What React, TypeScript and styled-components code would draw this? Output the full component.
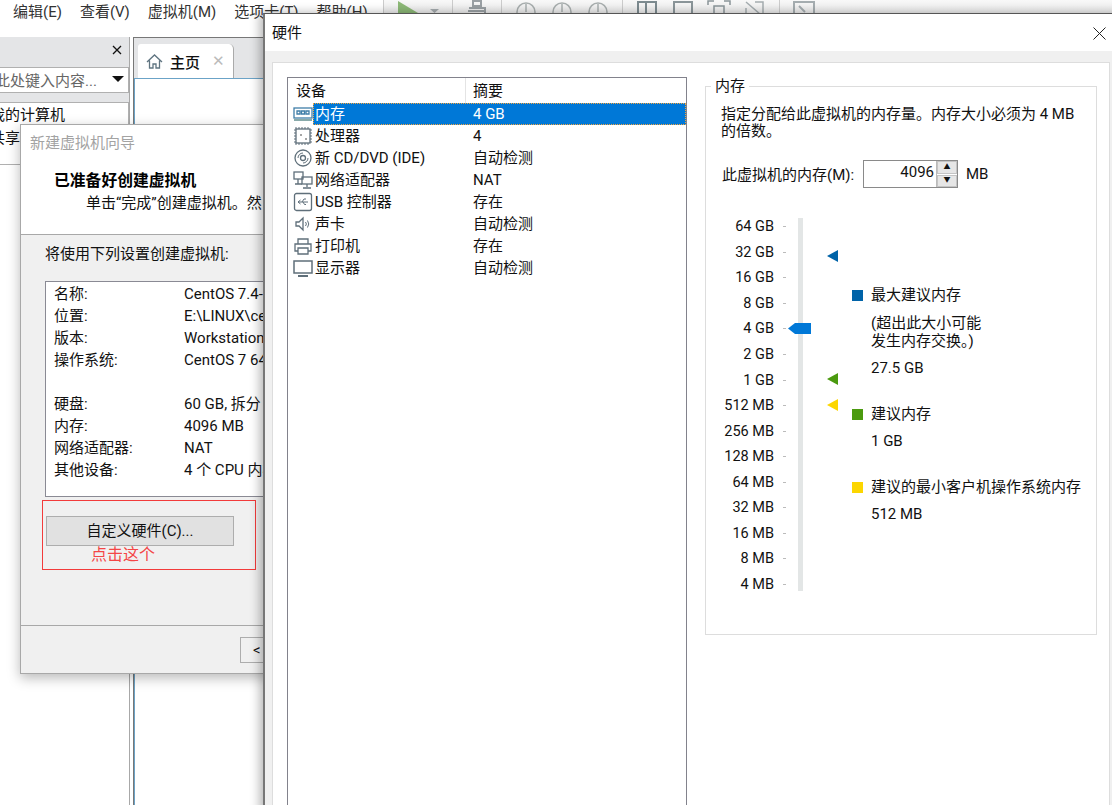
import styled, { createGlobalStyle } from 'styled-components';

const GlobalStyle = createGlobalStyle`
  html, body {
    margin: 0;
    padding: 0;
    background: #fff;
  }
  body {
    font-family: Roboto, "Noto Sans CJK SC", sans-serif;
    font-size: 15px;
    color: #111;
  }
`;

const Desktop = styled.div`
  position: relative;
  width: 1112px;
  height: 805px;
  overflow: hidden;
  background: #fff;
`;

/* main workstation window behind the dialogs */
const MenuBar = styled.div`
  height: 37px;
  display: flex;
  align-items: flex-start;
  background: #fff;
`;

const MenuList = styled.div`
  display: flex;
  gap: 18px;
  padding: 3px 0 0 13px;
  width: 383px;
  flex: none;
  box-sizing: border-box;
  line-height: 19px;
  color: #333;
  white-space: nowrap;
`;

const Toolbar = styled.div`
  flex: 1;
  display: flex;
  align-items: flex-start;
  background: linear-gradient(#f8f8f8, #ececec);
  height: 14px;
  overflow: hidden;
  filter: blur(0.4px);
`;

const ToolGroup = styled.div`
  display: flex;
  align-items: flex-start;
  gap: 12px;
  height: 14px;
  padding: 0 12px;
  border-left: 1px solid #ccc;
`;

const Workspace = styled.div`
  display: flex;
  height: 768px;
`;

const Library = styled.div`
  width: 129px;
  flex: none;
  background: #fff;
  border-right: 1px solid #a8a8a8;
  display: flex;
  flex-direction: column;
`;

const LibraryHead = styled.div`
  background: #e4e5e7;
  height: 65px;
  display: flex;
  flex-direction: column;
  align-items: flex-end;
`;

const LibraryClose = styled.div`
  height: 30px;
  padding: 6px 6px 0 0;
  box-sizing: border-box;
  line-height: 16px;
`;

const SearchBox = styled.div`
  width: 129px;
  height: 26px;
  box-sizing: border-box;
  background: #fff;
  border: 1px solid #b0b0b0;
  border-left: 0;
  display: flex;
  align-items: center;
  justify-content: space-between;
  padding: 0 4px 2px 0;
  color: #666;
  white-space: nowrap;
  overflow: hidden;
`;

const SearchText = styled.span`
  margin-left: -20px;
`;

const Caret = styled.span`
  width: 0;
  height: 0;
  border-left: 6px solid transparent;
  border-right: 6px solid transparent;
  border-top: 6px solid #111;
  flex: none;
`;

const LibraryTree = styled.div`
  height: 60px;
  background: #fff;
  border: 1px solid #b0b0b0;
  border-left: 0;
  line-height: 23px;
  padding-top: 1px;
  white-space: nowrap;
  overflow: hidden;
`;

const TreeItem = styled.div`
  margin-left: -10px;
`;

const TabArea = styled.div`
  flex: 1;
  background: #e4e5e7;
  margin-left: 3px;
  border-left: 1px solid #777;
  border-top: 1px solid #777;
  display: flex;
  flex-direction: column;
`;

const TabStrip = styled.div`
  height: 40px;
  padding: 6px 0 0 4px;
  box-sizing: border-box;
  display: flex;
`;

const Tab = styled.div`
  width: 96px;
  height: 34px;
  box-sizing: border-box;
  background: #fff;
  border-right: 1px solid #aaa;
  border-radius: 3px 5px 0 0;
  display: flex;
  align-items: center;
  gap: 7px;
  padding-left: 8px;
  font-weight: 500;
`;

const TabClose = styled.span`
  color: #bbb;
  font-size: 15px;
  margin-left: 5px;
`;

const TabBody = styled.div`
  flex: 1;
  background: #fff;
  border-top: 1px solid #6ba3c7;
  border-left: 1px solid #6ba3c7;
`;

/* windows on the desktop */
const WizardWindow = styled.div`
  position: absolute;
  left: 20px;
  top: 124px;
  width: 250px;
  height: 550px;
  box-sizing: border-box;
  border: 1px solid #a8a8a8;
  background: #f0f0f0;
  box-shadow: 0 4px 12px rgba(0, 0, 0, 0.28);
  display: flex;
  flex-direction: column;
  white-space: nowrap;
  overflow: hidden;
`;

const WizardHeader = styled.div`
  height: 109px;
  flex: none;
  background: #fff;
  border-bottom: 1px solid #a8a8a8;
  display: flex;
  flex-direction: column;
`;

const WizardTitle = styled.div`
  color: #a3a3a3;
  padding: 9px 0 0 9px;
  line-height: 19px;
`;

const WizardHeading = styled.div`
  font-weight: 700;
  font-size: 15.800px;
  color: #000;
  padding: 18px 0 0 33px;
  line-height: 19px;
`;

const WizardSub = styled.div`
  padding: 4px 0 0 65px;
  line-height: 19px;
`;

const WizardBody = styled.div`
  flex: 1;
  padding: 10px 0 0 24px;
  display: flex;
  flex-direction: column;
`;

const SummaryLabel = styled.div`
  line-height: 19px;
  margin-bottom: 17px;
`;

const SummaryBox = styled.div`
  width: 400px;
  height: 216px;
  box-sizing: border-box;
  background: #fff;
  border: 1px solid #8a8a94;
  padding: 1px 0 0 8px;
  line-height: 22px;
`;

const SummaryRow = styled.div`
  display: grid;
  grid-template-columns: 130px 1fr;
  height: 22px;
`;

const CustomArea = styled.div`
  position: relative;
  width: 214px;
  height: 70px;
  box-sizing: border-box;
  margin: 3px 0 0 -3px;
  border: 1px solid #f23b3b;
  padding: 15px 0 0 3px;
`;

const CustomButton = styled.div`
  width: 188px;
  height: 30px;
  box-sizing: border-box;
  background: #e1e1e1;
  border: 1px solid #adadad;
  text-align: center;
  line-height: 29px;
`;

const Annotation = styled.div`
  position: absolute;
  left: 48px;
  top: 44px;
  color: #f44646;
  font-size: 16px;
  line-height: 20px;
`;

const WizardFooter = styled.div`
  height: 48px;
  flex: none;
  border-top: 1px solid #a8a8a8;
  padding: 11px 0 0 219px;
  box-sizing: border-box;
`;

const BackButton = styled.div`
  width: 70px;
  height: 26px;
  box-sizing: border-box;
  border: 1px solid #adadad;
  line-height: 24px;
  padding-left: 12px;
`;

const HardwareWindow = styled.div`
  position: absolute;
  left: 263px;
  top: 13px;
  width: 860px;
  height: 800px;
  box-sizing: border-box;
  border-top: 1px solid #555;
  border-left: 2px solid #777;
  background: #f0f0f0;
  box-shadow: -3px 0 10px rgba(0, 0, 0, 0.3);
  display: flex;
  flex-direction: column;
`;

const HardwareTitle = styled.div`
  height: 37px;
  flex: none;
  box-sizing: border-box;
  background: #fff;
  display: flex;
  align-items: center;
  justify-content: space-between;
  padding: 2px 17px 0 7px;
  line-height: 19px;
`;

const HardwareBody = styled.div`
  flex: 1;
  margin: 11px 0 0 7px;
  width: 838px;
  box-sizing: border-box;
  background: #fff;
  border: 1px solid #ddd;
  border-bottom: 0;
  padding: 14px 0 0 14px;
  display: flex;
  gap: 18px;
`;

const DeviceList = styled.div`
  width: 400px;
  flex: none;
  box-sizing: border-box;
  border: 1px solid #82828c;
  border-bottom: 0;
  background: #fff;
`;

const DeviceHead = styled.div`
  height: 25px;
  display: grid;
  grid-template-columns: 177px 1fr;
  line-height: 27px;
`;

const HeadCell = styled.div`
  padding-left: 8px;
  & + & {
    border-left: 1px solid #e4e4e4;
    padding-left: 7px;
  }
`;

const DeviceRow = styled.div`
  height: 22px;
  display: flex;
  align-items: center;
  padding-left: 5px;
`;

const DeviceIcon = styled.svg`
  width: 20px;
  height: 20px;
  flex: none;
  fill: none;
  stroke: #5f6f7a;
  stroke-width: 1.3;
`;

const DeviceCells = styled.div<{ $selected?: boolean }>`
  flex: 1;
  height: 22px;
  box-sizing: border-box;
  display: grid;
  grid-template-columns: 158px 1fr;
  line-height: 21px;
  padding: 0 0 0 1px;
  color: ${(p) => (p.$selected ? '#fff' : '#111')};
  background: ${(p) => (p.$selected ? '#0078d7' : 'transparent')};
  border: 1px dotted ${(p) => (p.$selected ? '#f4a640' : 'transparent')};
  white-space: nowrap;
`;

const MemoryGroup = styled.fieldset`
  width: 392px;
  height: 558px;
  box-sizing: border-box;
  margin: 0;
  padding: 0 16px;
  border: 1px solid #ddd;
  min-inline-size: 0;
`;

const GroupLegend = styled.legend`
  margin-left: -11px;
  padding: 0 4px;
  line-height: 19px;
`;

const MemoryText = styled.div`
  line-height: 17px;
  margin-top: 10px;
  margin-left: -1px;
  white-space: nowrap;
`;

const SizeRow = styled.div`
  display: flex;
  align-items: center;
  margin-top: 20px;
  height: 28px;
`;

const SizeLabel = styled.span`
  width: 141px;
  flex: none;
  white-space: nowrap;
  padding-bottom: 2px;
`;

const SpinInput = styled.div`
  width: 95px;
  height: 28px;
  box-sizing: border-box;
  border: 1px solid #8a8a8a;
  display: flex;
  justify-content: space-between;
  padding-left: 6px;
`;

const SpinValue = styled.span`
  flex: 1;
  text-align: right;
  padding-right: 2px;
  line-height: 22px;
`;

const SpinButtons = styled.div`
  width: 20px;
  flex: none;
  display: flex;
  flex-direction: column;
  gap: 1px;
  background: #fff;
  border-left: 1px solid #bbb;
`;

const SpinButton = styled.div`
  flex: 1;
  background: #e6e6e6;
  border: 1px solid #c4c4c4;
  display: flex;
  align-items: center;
  justify-content: center;
  font-size: 7px;
  line-height: 1;
`;

const SizeUnit = styled.span`
  margin-left: 8px;
`;

const MemoryChart = styled.div`
  display: flex;
  margin-top: 25px;
`;

const Scale = styled.div`
  position: relative;
  width: 130px;
  flex: none;
`;

const Track = styled.div`
  position: absolute;
  left: 76px;
  top: 5px;
  width: 5px;
  height: 373px;
  background: #e3e6e6;
`;

const ScaleRow = styled.div`
  height: 25.55px;
  width: 64px;
  box-sizing: border-box;
  padding-top: 2px;
  display: flex;
  justify-content: flex-end;
  align-items: center;
  gap: 9px;
  line-height: 25px;
  white-space: nowrap;
  font-size: 14.500px;
`;

const Tick = styled.span`
  width: 3px;
  height: 1px;
  background: #bbb;
  flex: none;
  order: 1;
`;

const Thumb = styled.svg`
  position: absolute;
  left: 66px;
  top: 109px;
  width: 23px;
  height: 13px;
`;

const Marker = styled.svg<{ $top: number }>`
  position: absolute;
  left: 105px;
  top: ${(p) => p.$top}px;
  width: 11px;
  height: 12px;
`;

const Legend = styled.div`
  display: flex;
  flex-direction: column;
  padding-top: 73px;
`;

const LegendTitle = styled.div`
  display: flex;
  align-items: center;
  gap: 8px;
  line-height: 19px;
  white-space: nowrap;
`;

const Swatch = styled.span<{ $color: string }>`
  width: 11px;
  height: 11px;
  background: ${(p) => p.$color};
  flex: none;
`;

const LegendNote = styled.div`
  margin: 9px 0 1px 19px;
  line-height: 18px;
  white-space: nowrap;
`;

const LegendValue = styled.div`
  margin: 8px 0 27px 19px;
  line-height: 19px;
`;

const menus = ['编辑(E)', '查看(V)', '虚拟机(M)', '选项卡(T)', '帮助(H)'];

const wizardRows: [string, string][] = [
  ['名称:', 'CentOS 7.4-64'],
  ['位置:', 'E:\\LINUX\\centos'],
  ['版本:', 'Workstation 15.x'],
  ['操作系统:', 'CentOS 7 64 位'],
  ['', ''],
  ['硬盘:', '60 GB, 拆分'],
  ['内存:', '4096 MB'],
  ['网络适配器:', 'NAT'],
  ['其他设备:', '4 个 CPU 内核'],
];

const devices: { name: string; summary: string; icon: React.ReactNode }[] = [
  {
    name: '内存',
    summary: '4 GB',
    icon: (
      <>
        <rect x="1" y="4" width="18" height="10" stroke="#3f7ea8" />
        <path d="M4 7h3v3H4zM8.500 7h3v3h-3zM13 7h3v3h-3z" stroke="#3f7ea8" />
        <path d="M1 16h18" stroke="#8aa" strokeWidth="2" />
      </>
    ),
  },
  {
    name: '处理器',
    summary: '4',
    icon: (
      <>
        <rect x="3" y="3" width="14" height="14" />
        <circle cx="13" cy="13" r="0.8" fill="#333" stroke="none" />
        <circle cx="8" cy="9" r="0.8" fill="#333" stroke="none" />
        <path d="M3 1v2M6 1v2M9 1v2M12 1v2M15 1v2M3 17v2M6 17v2M9 17v2M12 17v2M15 17v2M1 4h2M1 7h2M1 10h2M1 13h2M1 16h2M17 4h2M17 7h2M17 10h2M17 13h2M17 16h2" strokeWidth="1" />
      </>
    ),
  },
  {
    name: '新 CD/DVD (IDE)',
    summary: '自动检测',
    icon: (
      <>
        <circle cx="10" cy="10" r="8" />
        <circle cx="10" cy="10" r="2.500" />
        <path d="M5 10a5 5 0 0 1 5-5M15 10a5 5 0 0 1-5 5" strokeWidth="1" />
      </>
    ),
  },
  {
    name: '网络适配器',
    summary: 'NAT',
    icon: (
      <>
        <rect x="1" y="2" width="9" height="7" />
        <rect x="9" y="7" width="10" height="7" />
        <path d="M5 9v5h4M14 14v3M10 18h8M2 14h3" />
      </>
    ),
  },
  {
    name: 'USB 控制器',
    summary: '存在',
    icon: (
      <>
        <rect x="1.500" y="1.500" width="17" height="17" rx="2" />
        <path d="M5 10h10M5 10l2.500-2M5 10l2.500 2M9 10l2-3h2M10 10l1.500 2.500H13" strokeWidth="1" />
      </>
    ),
  },
  {
    name: '声卡',
    summary: '自动检测',
    icon: (
      <>
        <path d="M3 8h3l4-4v12l-4-4H3z" />
        <path d="M12.500 8a3 3 0 0 1 0 4M14.500 6.500a6 6 0 0 1 0 7" strokeWidth="1" />
      </>
    ),
  },
  {
    name: '打印机',
    summary: '存在',
    icon: (
      <>
        <path d="M5 8V3h10v5M5 15H2V8h16v7h-3" />
        <path d="M5 12h10v6H5z" />
      </>
    ),
  },
  {
    name: '显示器',
    summary: '自动检测',
    icon: (
      <>
        <rect x="1" y="3" width="18" height="12" strokeWidth="1.500" />
        <path d="M5 18h10" strokeWidth="2" />
      </>
    ),
  },
];

const scaleLabels = [
  '64 GB', '32 GB', '16 GB', '8 GB', '4 GB', '2 GB', '1 GB', '512 MB',
  '256 MB', '128 MB', '64 MB', '32 MB', '16 MB', '8 MB', '4 MB',
];

function Clock() {
  return (
    <svg width="24" height="14" viewBox="0 0 24 14" fill="none" stroke="#aab0b0" strokeWidth="1.500">
      <circle cx="12" cy="12" r="9" />
      <path d="M12 4v8" />
    </svg>
  );
}

function Square() {
  return (
    <svg width="24" height="14" viewBox="0 0 24 14" fill="none" stroke="#7d8b90" strokeWidth="2">
      <rect x="3" y="2" width="18" height="18" />
      <path d="M11 2v18" />
    </svg>
  );
}

export default function App() {
  return (
    <Desktop>
      <GlobalStyle />
      <MenuBar>
        <MenuList>
          {menus.map((m) => (
            <span key={m}>{m}</span>
          ))}
        </MenuList>
        <Toolbar>
          <ToolGroup>
            <svg width="22" height="14" viewBox="0 0 22 14">
              <path d="M2 1l20 12H2z" fill="#8db977" />
            </svg>
            <svg width="10" height="14" viewBox="0 0 10 14">
              <path d="M0 9h9l-4.500 4z" fill="#a5abae" />
            </svg>
          </ToolGroup>
          <ToolGroup>
            <svg width="24" height="14" viewBox="0 0 24 14" fill="none" stroke="#9aa0a4" strokeWidth="2">
              <path d="M8 1h8v5H8zM3 11h18M4 8h16v6M12 6v2" />
            </svg>
          </ToolGroup>
          <ToolGroup>
            <Clock />
            <Clock />
            <Clock />
          </ToolGroup>
          <ToolGroup>
            <Square />
            <svg width="24" height="14" viewBox="0 0 24 14" fill="none" stroke="#8a9599" strokeWidth="2">
              <rect x="3" y="2" width="18" height="18" />
            </svg>
            <svg width="24" height="14" viewBox="0 0 24 14" fill="none" stroke="#8a9599" strokeWidth="1.500">
              <path d="M1 5V1h6M17 1h6v4M7 6h10v8H7z" />
            </svg>
            <svg width="24" height="14" viewBox="0 0 24 14" fill="none" stroke="#a5adb0" strokeWidth="1.500">
              <path d="M3 2l14 12M12 2h8v12M3 8v6h6" />
            </svg>
          </ToolGroup>
          <ToolGroup>
            <svg width="24" height="14" viewBox="0 0 24 14" fill="none" stroke="#a5adb0" strokeWidth="2">
              <rect x="2" y="2" width="20" height="16" />
              <path d="M7 6l6 6" />
            </svg>
          </ToolGroup>
        </Toolbar>
      </MenuBar>
      <Workspace>
        <Library>
          <LibraryHead>
            <LibraryClose>
              <svg width="12" height="12" viewBox="0 0 12 12" stroke="#111" strokeWidth="1.300">
                <path d="M2 2l8 8M10 2l-8 8" />
              </svg>
            </LibraryClose>
            <SearchBox>
              <SearchText>在此处键入内容...</SearchText>
              <Caret />
            </SearchBox>
          </LibraryHead>
          <LibraryTree>
            <TreeItem>我的计算机</TreeItem>
            <TreeItem>共享</TreeItem>
          </LibraryTree>
        </Library>
        <TabArea>
          <TabStrip>
            <Tab>
              <svg width="17" height="17" viewBox="0 0 17 17" fill="none" stroke="#5f7480" strokeWidth="1.300">
                <path d="M1 9l7.500-7L16 9M3.500 7.500V15H7v-4h3v4h3.500V7.500" />
              </svg>
              主页
              <TabClose>✕</TabClose>
            </Tab>
          </TabStrip>
          <TabBody />
        </TabArea>
      </Workspace>

      <WizardWindow>
        <WizardHeader>
          <WizardTitle>新建虚拟机向导</WizardTitle>
          <WizardHeading>已准备好创建虚拟机</WizardHeading>
          <WizardSub>单击“完成”创建虚拟机。然</WizardSub>
        </WizardHeader>
        <WizardBody>
          <SummaryLabel>将使用下列设置创建虚拟机:</SummaryLabel>
          <SummaryBox>
            {wizardRows.map(([label, value], i) => (
              <SummaryRow key={i}>
                <span>{label}</span>
                <span>{value}</span>
              </SummaryRow>
            ))}
          </SummaryBox>
          <CustomArea>
            <CustomButton>自定义硬件(C)...</CustomButton>
            <Annotation>点击这个</Annotation>
          </CustomArea>
        </WizardBody>
        <WizardFooter>
          <BackButton>&lt;</BackButton>
        </WizardFooter>
      </WizardWindow>

      <HardwareWindow>
        <HardwareTitle>
          硬件
          <svg width="13" height="13" viewBox="0 0 13 13" stroke="#222" strokeWidth="1">
            <path d="M0.500 0.500l12 12M12.500 0.500l-12 12" />
          </svg>
        </HardwareTitle>
        <HardwareBody>
          <DeviceList>
            <DeviceHead>
              <HeadCell>设备</HeadCell>
              <HeadCell>摘要</HeadCell>
            </DeviceHead>
            {devices.map((d, i) => (
              <DeviceRow key={d.name}>
                <DeviceIcon viewBox="0 0 20 20">{d.icon}</DeviceIcon>
                <DeviceCells $selected={i === 0}>
                  <span>{d.name}</span>
                  <span>{d.summary}</span>
                </DeviceCells>
              </DeviceRow>
            ))}
          </DeviceList>
          <MemoryGroup>
            <GroupLegend>内存</GroupLegend>
            <MemoryText>
              指定分配给此虚拟机的内存量。内存大小必须为 4 MB
              <br />
              的倍数。
            </MemoryText>
            <SizeRow>
              <SizeLabel>此虚拟机的内存(M):</SizeLabel>
              <SpinInput>
                <SpinValue>4096</SpinValue>
                <SpinButtons>
                  <SpinButton>▲</SpinButton>
                  <SpinButton>▼</SpinButton>
                </SpinButtons>
              </SpinInput>
              <SizeUnit>MB</SizeUnit>
            </SizeRow>
            <MemoryChart>
              <Scale>
                <Track />
                {scaleLabels.map((l) => (
                  <ScaleRow key={l}>
                    <Tick />
                    {l}
                  </ScaleRow>
                ))}
                <Thumb viewBox="0 0 23 13">
                  <path d="M0 6.500L7 1h16v11H7z" fill="#0078d7" />
                </Thumb>
                <Marker $top={37} viewBox="0 0 11 12">
                  <path d="M0 6L11 0v12z" fill="#0063a8" />
                </Marker>
                <Marker $top={160} viewBox="0 0 11 12">
                  <path d="M0 6L11 0v12z" fill="#4b9a0f" />
                </Marker>
                <Marker $top={186} viewBox="0 0 11 12">
                  <path d="M0 6L11 0v12z" fill="#fcd600" />
                </Marker>
              </Scale>
              <Legend>
                <LegendTitle>
                  <Swatch $color="#0063a8" />
                  最大建议内存
                </LegendTitle>
                <LegendNote>
                  (超出此大小可能
                  <br />
                  发生内存交换。)
                </LegendNote>
                <LegendValue>27.5 GB</LegendValue>
                <LegendTitle>
                  <Swatch $color="#4b9a0f" />
                  建议内存
                </LegendTitle>
                <LegendValue>1 GB</LegendValue>
                <LegendTitle>
                  <Swatch $color="#fcd600" />
                  建议的最小客户机操作系统内存
                </LegendTitle>
                <LegendValue>512 MB</LegendValue>
              </Legend>
            </MemoryChart>
          </MemoryGroup>
        </HardwareBody>
      </HardwareWindow>
    </Desktop>
  );
}
